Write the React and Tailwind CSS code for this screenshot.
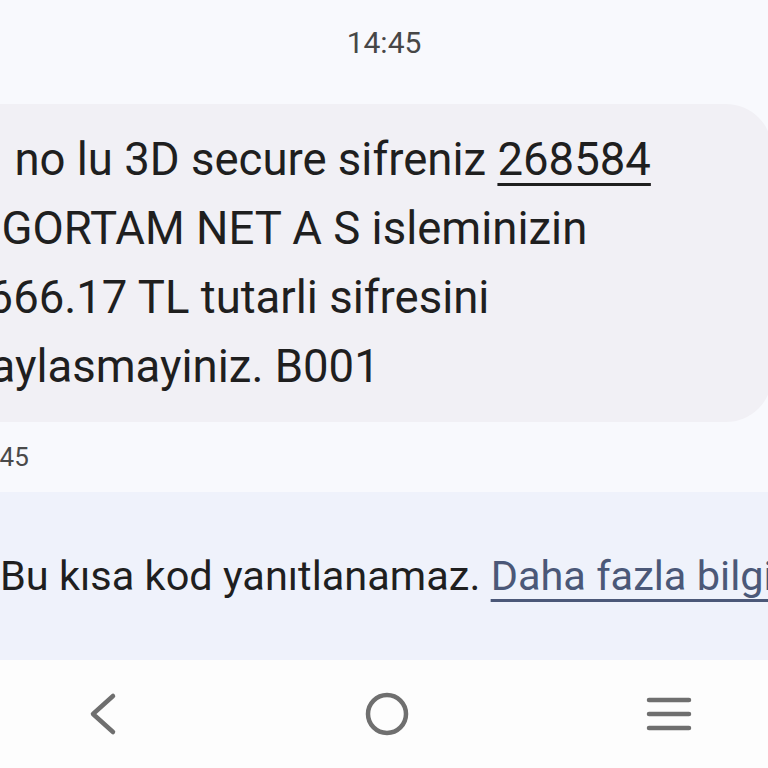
import React from "react"

const lines = [
    { prefix: "41 ", text: "no lu 3D secure sifreniz ", code: "268584", shift: "-ml-[10px]" },
    { prefix: "SI", text: "GORTAM NET A S isleminizin", shift: "" },
    { prefix: "1", text: "666.17 TL tutarli sifresini", shift: "" },
    { prefix: "P", text: "aylasmayiniz. B001", shift: "" },
]

const NavBar = () => (
    <div className="flex-1 bg-[#fdfdfd] flex items-center">
        {/* Back */}
        <svg className="ml-[86px] w-[32px] h-[46px]" viewBox="0 0 32 46" fill="none">
            <path d="M27 5 L7 23 L27 41" stroke="#6f6f6f" strokeWidth="4.5" strokeLinecap="round" strokeLinejoin="round" />
        </svg>
        {/* Home */}
        <svg className="ml-[246px] w-[46px] h-[46px]" viewBox="0 0 46 46" fill="none">
            <circle cx="23" cy="23" r="19" stroke="#6f6f6f" strokeWidth="4.5" />
        </svg>
        {/* Recents */}
        <svg className="ml-[235px] w-[48px] h-[46px]" viewBox="0 0 48 46" fill="none">
            <path d="M4 9 H44 M4 23 H44 M4 37 H44" stroke="#6f6f6f" strokeWidth="4.5" strokeLinecap="round" />
        </svg>
    </div>
)

const App = () => {
    return (
        <div className="w-[768px] h-[768px] overflow-hidden bg-[#f8f9fd] flex flex-col font-['Roboto',sans-serif]">
            {/* Date header */}
            <div className="h-[104px] shrink-0 flex items-center justify-center pb-[20px] text-[30px] text-[#474747]">
                14:45
            </div>

            {/* Message bubble */}
            <div className="shrink-0 -ml-[80px] -mr-[4px] rounded-[46px] bg-[#f1f0f5] py-[21px] pl-[42px] text-[45.5px] leading-[69px] text-[#1f1f1f] whitespace-nowrap">
                {lines.map((line, index) => (
                    <div key={index} className={line.shift}>
                        {line.prefix}{line.text}
                        {line.code && <span className="underline decoration-[3px] underline-offset-[8px]">{line.code}</span>}
                    </div>
                ))}
            </div>

            {/* Timestamp */}
            <div className="h-[70px] shrink-0 flex items-center -ml-[36px] text-[26px] text-[#4a4a4a]">
                14:45
            </div>

            {/* Info band */}
            <div className="h-[168px] shrink-0 bg-[#eff2fb] flex items-center whitespace-nowrap text-[41.5px] text-[#1f1f1f]">
                <span>Bu kısa kod yanıtlanamaz.&nbsp;</span>
                <span className="text-[#4b5878] underline decoration-[3px] underline-offset-[9px]">Daha fazla bilgi</span>
            </div>

            <NavBar />
        </div>
    )
}

export default App
